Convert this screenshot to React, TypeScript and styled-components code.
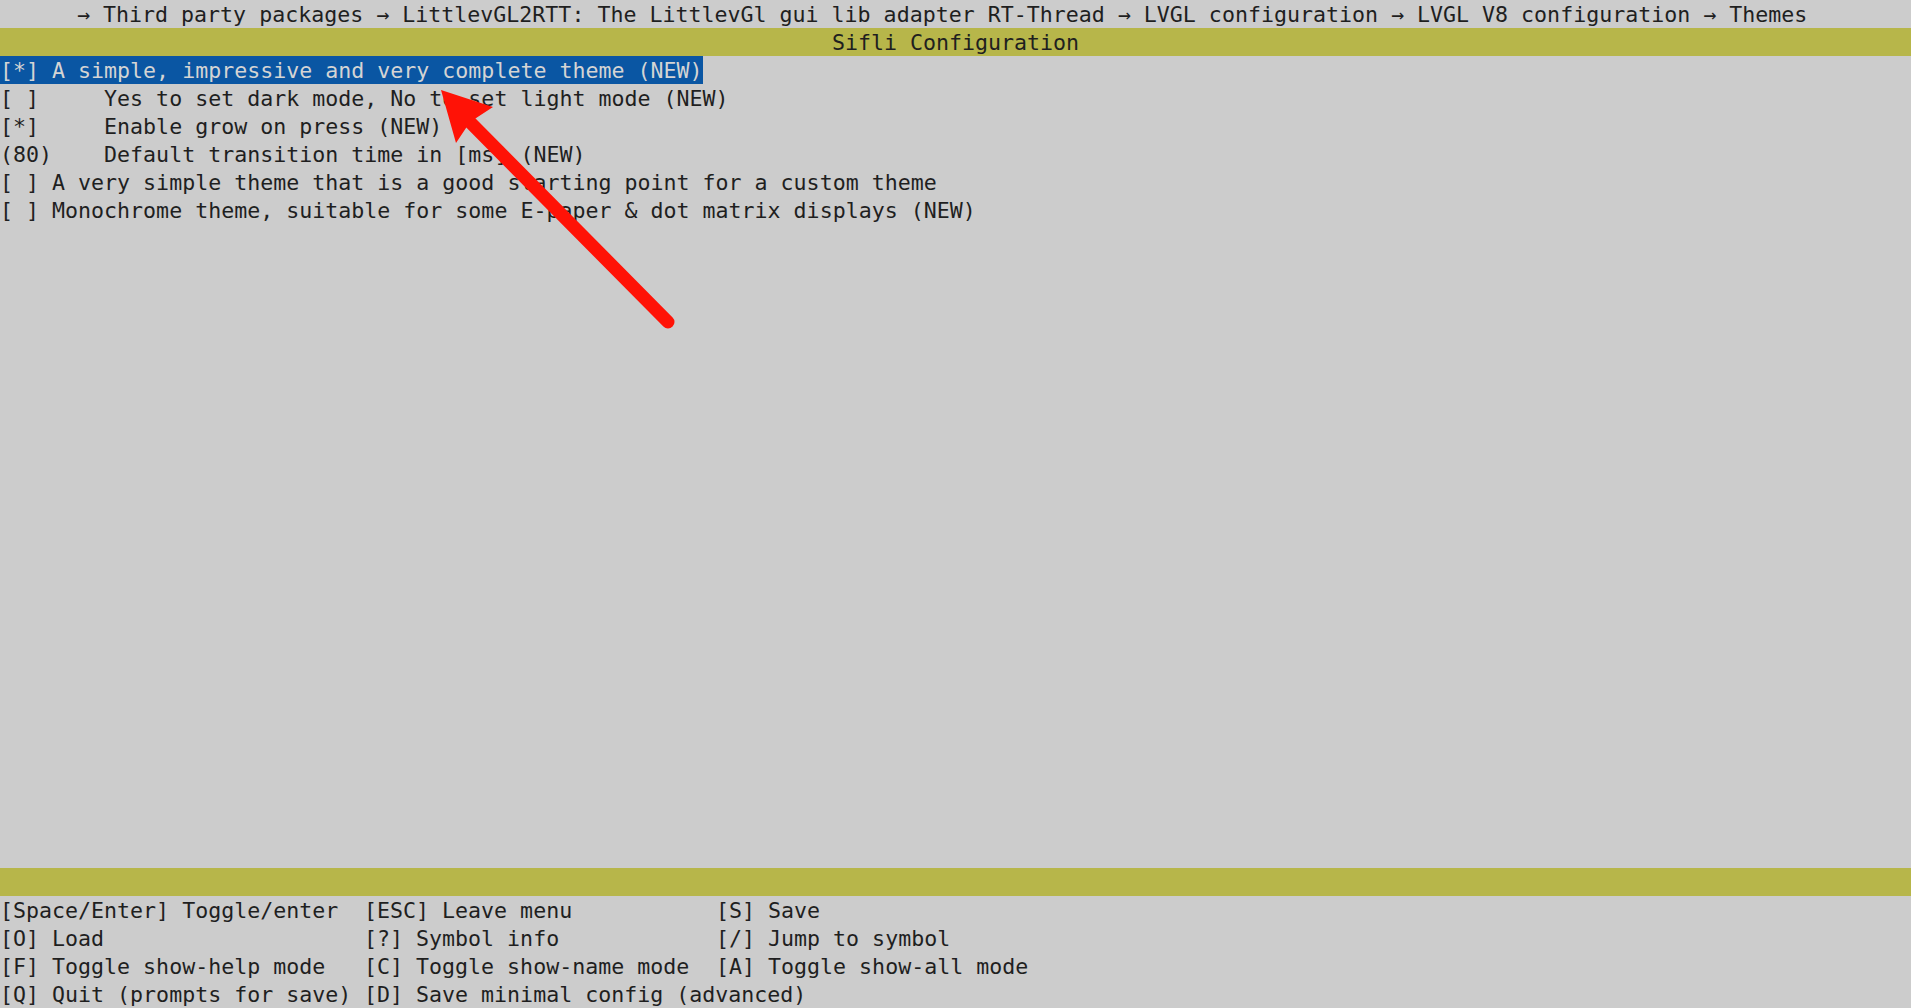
import React from "react";
import styled, { createGlobalStyle } from "styled-components";

const Global = createGlobalStyle`
  html, body { margin: 0; padding: 0; background: #cccccc; }
  body { overflow: hidden; }
`;

const Screen = styled.div`
  position: relative;
  width: 1911px;
  height: 1008px;
  display: flex;
  flex-direction: column;
  background: #cccccc;
  color: #1f1f1f;
  font-family: "DejaVu Sans Mono", "Liberation Mono", monospace;
  font-size: 21.62px;
  line-height: 29px;
  overflow: hidden;
`;

const Line = styled.div`
  height: 28px;
  white-space: pre;
  overflow: hidden;
`;

const Breadcrumb = styled(Line)`
  padding-left: 77px;
`;

const Bar = styled.div`
  height: 28px;
  background: #b7b64a;
  color: #1f1f1f;
  text-align: center;
  white-space: pre;
  overflow: hidden;
`;

const Menu = styled.div`
  flex: 1;
  display: flex;
  flex-direction: column;
`;

const Item = styled.span<{ $selected?: boolean }>`
  display: inline-block;
  height: 28px;
  background: ${(p) => (p.$selected ? "#0a56a3" : "transparent")};
  color: ${(p) => (p.$selected ? "#d4d4d4" : "inherit")};
`;

const Keys = styled.div`
  display: grid;
  grid-template-columns: 364px 352px 1fr;
  grid-auto-rows: 28px;
  white-space: pre;
  overflow: hidden;
`;

const Overlay = styled.svg`
  position: absolute;
  left: 0;
  top: 0;
  pointer-events: none;
`;

const items = [
  { text: "[*] A simple, impressive and very complete theme (NEW)", selected: true },
  { text: "[ ]     Yes to set dark mode, No to set light mode (NEW)" },
  { text: "[*]     Enable grow on press (NEW)" },
  { text: "(80)    Default transition time in [ms] (NEW)" },
  { text: "[ ] A very simple theme that is a good starting point for a custom theme" },
  { text: "[ ] Monochrome theme, suitable for some E-paper & dot matrix displays (NEW)" },
];

const keys = [
  "[Space/Enter] Toggle/enter", "[ESC] Leave menu", "[S] Save",
  "[O] Load", "[?] Symbol info", "[/] Jump to symbol",
  "[F] Toggle show-help mode", "[C] Toggle show-name mode", "[A] Toggle show-all mode",
  "[Q] Quit (prompts for save)", "[D] Save minimal config (advanced)", "",
];

export default function App() {
  return (
    <>
      <Global />
      <Screen>
        <Breadcrumb>
          → Third party packages → LittlevGL2RTT: The LittlevGl gui lib adapter RT-Thread → LVGL configuration → LVGL V8 configuration → Themes
        </Breadcrumb>
        <Bar>Sifli Configuration</Bar>
        <Menu>
          {items.map((it, i) => (
            <Line key={i}>
              <Item $selected={it.selected}>{it.text}</Item>
            </Line>
          ))}
        </Menu>
        <Bar />
        <Keys>
          {keys.map((k, i) => (
            <span key={i}>{k}</span>
          ))}
        </Keys>
        <Overlay width="1911" height="1008" viewBox="0 0 1911 1008">
          <line x1="668" y1="322" x2="462" y2="114" stroke="#ff1206" strokeWidth="13" strokeLinecap="round" />
          <polygon points="441,90 493,107 470,122 456,143" fill="#ff1206" />
        </Overlay>
      </Screen>
    </>
  );
}
